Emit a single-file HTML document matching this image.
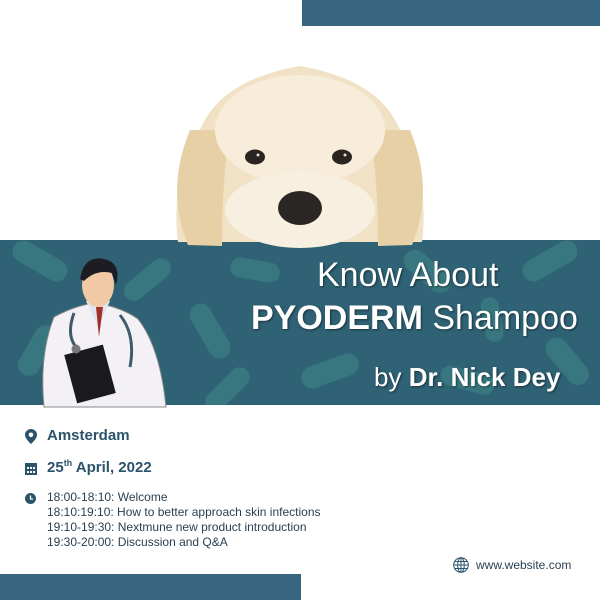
<!DOCTYPE html>
<html><head><meta charset="utf-8"><style>
*{margin:0;padding:0;box-sizing:border-box}
body{width:600px;height:600px;background:#fff;position:relative;overflow:hidden;font-family:"Liberation Sans","DejaVu Sans",sans-serif}
.abs{position:absolute}
.bar{background:#386680}
.t{color:#fff;position:absolute;white-space:nowrap;text-shadow:1px 1px 2px rgba(0,0,0,.5)}
.info{color:#2b536b;position:absolute;white-space:nowrap}
</style></head><body>
<div class="abs bar" style="left:302px;top:0;width:298px;height:26px"></div>
<div class="abs bar" style="left:0;top:574px;width:301px;height:26px"></div>

<!-- banner -->
<svg class="abs" style="left:0;top:240px" width="600" height="165">
<rect width="600" height="165" fill="#2f6275"/>
<g fill="#3b7d82" opacity=".8">
<rect x="10" y="10" width="60" height="22" rx="11" transform="rotate(30 40 21)"/>
<rect x="120" y="30" width="55" height="20" rx="10" transform="rotate(-40 147 40)"/>
<rect x="180" y="80" width="60" height="22" rx="11" transform="rotate(60 210 91)"/>
<rect x="230" y="20" width="50" height="20" rx="10" transform="rotate(10 255 30)"/>
<rect x="300" y="120" width="60" height="22" rx="11" transform="rotate(-20 330 131)"/>
<rect x="400" y="20" width="55" height="22" rx="11" transform="rotate(40 427 31)"/>
<rect x="520" y="10" width="60" height="22" rx="11" transform="rotate(-30 550 21)"/>
<rect x="540" y="110" width="55" height="22" rx="11" transform="rotate(50 567 121)"/>
<rect x="10" y="100" width="55" height="22" rx="11" transform="rotate(-60 37 111)"/>
<rect x="440" y="130" width="55" height="20" rx="10" transform="rotate(15 467 140)"/>
<rect x="200" y="140" width="55" height="20" rx="10" transform="rotate(-45 227 150)"/>
<rect x="470" y="70" width="45" height="18" rx="9" transform="rotate(80 492 79)"/>
</g>
</svg>

<!-- dog -->
<svg class="abs" style="left:160px;top:60px" width="280" height="190">
<path d="M40 70 Q60 20 140 6 Q220 20 240 70 Q270 120 262 182 L18 182 Q10 120 40 70Z" fill="#f1e2c6"/>
<path d="M30 70 Q5 130 28 185 L62 186 Q62 120 70 70Z" fill="#e8d0a6"/>
<path d="M250 70 Q275 130 252 185 L218 186 Q218 120 210 70Z" fill="#e8d0a6"/>
<ellipse cx="140" cy="70" rx="85" ry="55" fill="#f7edda"/>
<ellipse cx="140" cy="150" rx="75" ry="38" fill="#f7efdf"/>
<ellipse cx="95" cy="97" rx="10" ry="7.5" fill="#2a2420"/>
<ellipse cx="182" cy="97" rx="10" ry="7.5" fill="#2a2420"/>
<circle cx="98" cy="95" r="1.5" fill="#ddd"/><circle cx="185" cy="95" r="1.5" fill="#ddd"/>
<ellipse cx="140" cy="148" rx="22" ry="17" fill="#2a2624"/>
</svg>

<!-- doctor -->
<svg class="abs" style="left:36px;top:255px" width="135" height="155">
<path d="M18 62 Q40 50 60 48 Q85 52 102 64 Q124 92 130 152 L8 152 Q3 100 18 62Z" fill="#f3f1f5" stroke="#888" stroke-width="1"/>
<path d="M50 46 L62 72 L74 46Z" fill="#dfe6f0"/>
<path d="M60 52 L63 82 L67 52Z" fill="#a2302a"/>
<ellipse cx="62" cy="30" rx="16" ry="22" fill="#f1c9a4"/>
<path d="M44 24 Q48 0 68 4 Q86 8 80 30 L76 18 Q60 14 48 26Z" fill="#1c1c22"/>
<rect x="34" y="94" width="40" height="50" fill="#1a1a1e" transform="rotate(-15 54 119)"/>
<path d="M38 58 Q30 80 40 92 M84 60 Q100 80 94 112" stroke="#3f5a6e" stroke-width="3" fill="none"/>
<circle cx="40" cy="94" r="4.5" fill="#777"/>
</svg>

<div class="t" style="left:317px;top:256px;font-size:34px">Know About</div>
<div class="t" style="left:251px;top:299px;font-size:34px"><b>PYODERM</b> Shampoo</div>
<div class="t" style="left:374px;top:362px;font-size:26px">by <b>Dr. Nick Dey</b></div>

<!-- info -->
<svg class="abs" style="left:25px;top:429px" width="12" height="15" viewBox="0 0 12 15"><path d="M6 0C2.7 0 0 2.6 0 5.8 0 10 6 15 6 15s6-5 6-9.2C12 2.6 9.3 0 6 0z" fill="#2b536b"/><circle cx="6" cy="5.8" r="2.3" fill="#fff"/></svg>
<div class="info" style="left:47px;top:427px;font-size:15px;font-weight:bold">Amsterdam</div>
<svg class="abs" style="left:25px;top:463px" width="12" height="12"><rect width="12" height="12" fill="#2b536b"/><g fill="#fff"><rect x="2" y="4" width="2" height="2"/><rect x="5" y="4" width="2" height="2"/><rect x="8" y="4" width="2" height="2"/><rect x="2" y="8" width="2" height="2"/><rect x="5" y="8" width="2" height="2"/><rect x="8" y="8" width="2" height="2"/></g></svg>
<div class="info" style="left:47px;top:458px;font-size:15px;font-weight:bold">25<sup style="font-size:9px">th</sup> April, 2022</div>
<svg class="abs" style="left:25px;top:493px" width="11" height="11"><circle cx="5.5" cy="5.5" r="5.5" fill="#2b536b"/><path d="M5.5 2.5V6H8" stroke="#fff" stroke-width="1.3" fill="none"/></svg>
<div class="info" style="left:47px;top:490px;font-size:12px;line-height:15px;color:#2a3f52">18:00-18:10: Welcome<br>18:10:19:10: How to better approach skin infections<br>19:10-19:30: Nextmune new product introduction<br>19:30-20:00: Discussion and Q&amp;A</div>
<svg class="abs" style="left:453px;top:557px" width="16" height="16" viewBox="0 0 16 16"><g stroke="#2b536b" fill="none" stroke-width="1"><circle cx="8" cy="8" r="7.3"/><ellipse cx="8" cy="8" rx="3.3" ry="7.3"/><path d="M0.7 8H15.3M2 4.5H14M2 11.5H14M8 .7V15.3"/></g></svg>
<div class="info" style="left:476px;top:558px;font-size:12px;color:#2a3f52">www.website.com</div>
</body></html>
